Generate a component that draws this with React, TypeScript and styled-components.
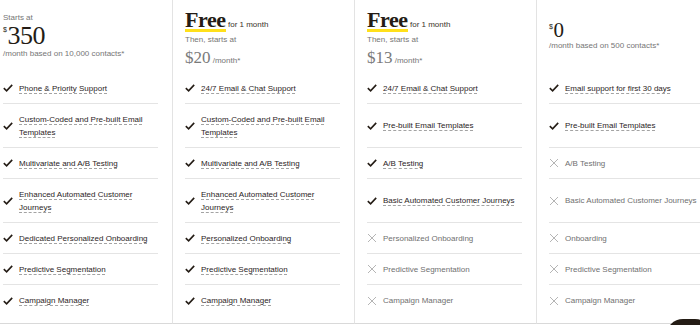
import styled, { createGlobalStyle } from "styled-components";

const GlobalStyle = createGlobalStyle`
  html, body {
    margin: 0;
    padding: 0;
    background: #fff;
    overflow: hidden;
  }
  body {
    font-family: "Liberation Sans", Arial, sans-serif;
    color: #241c15;
  }
`;

type Feature = { label: string; included: boolean };

type Plan = {
  kind: "starts" | "trial" | "free";
  price: string;
  note: string;
  headerTop: number;
  features: Feature[];
};

const yes = (label: string): Feature => ({ label, included: true });
const no = (label: string): Feature => ({ label, included: false });

// rows line up across columns like a table, so heights go by index
const TALL_ROWS = [1, 3];

const plans: Plan[] = [
  {
    kind: "starts",
    price: "350",
    note: "/month based on 10,000 contacts*",
    headerTop: 12,
    features: [
      yes("Phone & Priority Support"),
      yes("Custom-Coded and Pre-built Email Templates"),
      yes("Multivariate and A/B Testing"),
      yes("Enhanced Automated Customer Journeys"),
      yes("Dedicated Personalized Onboarding"),
      yes("Predictive Segmentation"),
      yes("Campaign Manager"),
    ],
  },
  {
    kind: "trial",
    price: "$20",
    note: "/month*",
    headerTop: 10,
    features: [
      yes("24/7 Email & Chat Support"),
      yes("Custom-Coded and Pre-built Email Templates"),
      yes("Multivariate and A/B Testing"),
      yes("Enhanced Automated Customer Journeys"),
      yes("Personalized Onboarding"),
      yes("Predictive Segmentation"),
      yes("Campaign Manager"),
    ],
  },
  {
    kind: "trial",
    price: "$13",
    note: "/month*",
    headerTop: 10,
    features: [
      yes("24/7 Email & Chat Support"),
      yes("Pre-built Email Templates"),
      yes("A/B Testing"),
      yes("Basic Automated Customer Journeys"),
      no("Personalized Onboarding"),
      no("Predictive Segmentation"),
      no("Campaign Manager"),
    ],
  },
  {
    kind: "free",
    price: "0",
    note: "/month based on 500 contacts*",
    headerTop: 21,
    features: [
      yes("Email support for first 30 days"),
      yes("Pre-built Email Templates"),
      no("A/B Testing"),
      no("Basic Automated Customer Journeys"),
      no("Onboarding"),
      no("Predictive Segmentation"),
      no("Campaign Manager"),
    ],
  },
];

const CheckIcon = () => (
  <svg width="10" height="8" viewBox="0 0 10 8" fill="none">
    <path d="M0.8 4.2 L3.6 6.8 L9.2 0.9" stroke="#241c15" strokeWidth="1.6" strokeLinejoin="miter" />
  </svg>
);

const CrossIcon = () => (
  <svg width="10" height="10" viewBox="0 0 10 10" fill="none">
    <path d="M1 1 L9 9 M9 1 L1 9" stroke="#b5b5b5" strokeWidth="1" />
  </svg>
);

const PlanHeader = ({ plan }: { plan: Plan }) => {
  if (plan.kind === "trial") {
    return (
      <Header $top={plan.headerTop}>
        <TitleLine>
          <FreeWord>Free</FreeWord>
          <Small> for 1 month</Small>
        </TitleLine>
        <Muted>Then, starts at</Muted>
        <PriceLine>
          <SmallPrice>{plan.price}</SmallPrice>
          <Muted> /month*</Muted>
        </PriceLine>
      </Header>
    );
  }
  return (
    <Header $top={plan.headerTop}>
      {plan.kind === "starts" && <Muted>Starts at</Muted>}
      <BigPrice $size={plan.kind === "starts" ? 26 : 21}>
        <Dollar>$</Dollar>
        {plan.price}
      </BigPrice>
      <Muted>{plan.note}</Muted>
    </Header>
  );
};

export default function App() {
  return (
    <>
      <GlobalStyle />
      <Track>
        {plans.map((plan, i) => (
          <Column key={i}>
            <PlanHeader plan={plan} />
            <FeatureList>
              {plan.features.map((f, j) => (
                <Row key={j} $tall={TALL_ROWS.includes(j)} $last={j === plan.features.length - 1}>
                  <IconBox>{f.included ? <CheckIcon /> : <CrossIcon />}</IconBox>
                  <Label $included={f.included}>{f.label}</Label>
                </Row>
              ))}
            </FeatureList>
          </Column>
        ))}
      </Track>
      <ChatBubble />
    </>
  );
}

const Track = styled.div`
  display: flex;
  margin-left: -9px;
  width: max-content;
`;

const Column = styled.div`
  box-sizing: border-box;
  width: 182px;
  height: 324px;
  padding: 0 14px 0 12px;
  border-right: 1px solid #e3e3e3;
  border-bottom: 1px solid #d9d9d9;
  display: flex;
  flex-direction: column;
  background: #fff;
`;

const Header = styled.div<{ $top: number }>`
  box-sizing: border-box;
  height: 73px;
  padding-top: ${(p) => p.$top}px;
  display: flex;
  flex-direction: column;
`;

const Muted = styled.span`
  font-size: 8px;
  line-height: 12px;
  color: #767676;
`;

const Small = styled.span`
  font-size: 8px;
  color: #3a332d;
`;

const TitleLine = styled.div`
  line-height: 19px;
  white-space: nowrap;
`;

const FreeWord = styled.span`
  display: inline-block;
  font-family: "Liberation Serif", "Times New Roman", serif;
  font-weight: 700;
  font-size: 22px;
  line-height: 19px;
  letter-spacing: -0.4px;
  border-bottom: 3px solid #ffe01b;
`;

const PriceLine = styled.div`
  margin-top: 3px;
  line-height: 18px;
  white-space: nowrap;
`;

const SmallPrice = styled.span`
  font-family: "Liberation Serif", "Times New Roman", serif;
  font-size: 17px;
  color: #7a7a7a;
`;

const BigPrice = styled.div<{ $size: number }>`
  font-family: "Liberation Serif", "Times New Roman", serif;
  font-size: ${(p) => p.$size}px;
  line-height: ${(p) => p.$size - 3}px;
  letter-spacing: -0.5px;
  color: #241c15;
  margin-bottom: 1px;
`;

const Dollar = styled.span`
  font-size: 7px;
  vertical-align: top;
  line-height: 12px;
  margin-right: 1px;
  font-family: "Liberation Sans", Arial, sans-serif;
`;

const FeatureList = styled.div`
  display: flex;
  flex-direction: column;
`;

const Row = styled.div<{ $tall: boolean; $last: boolean }>`
  box-sizing: border-box;
  height: ${(p) => (p.$tall ? 44 : 31)}px;
  display: flex;
  align-items: center;
  gap: 6px;
  border-bottom: ${(p) => (p.$last ? "none" : "1px solid #e4e4e4")};
`;

const IconBox = styled.span`
  flex: 0 0 10px;
  display: flex;
  align-items: center;
  justify-content: center;
`;

const Label = styled.span<{ $included: boolean }>`
  font-size: 8px;
  line-height: 13px;
  color: ${(p) => (p.$included ? "#2b241e" : "#707070")};
  text-decoration: ${(p) => (p.$included ? "underline dashed #a3a3a3" : "none")};
  text-decoration-thickness: 1px;
  text-underline-offset: 2px;
`;

const ChatBubble = styled.div`
  position: fixed;
  right: -12px;
  bottom: -28px;
  width: 46px;
  height: 34px;
  border-radius: 18px;
  background: #241c15;
`;
